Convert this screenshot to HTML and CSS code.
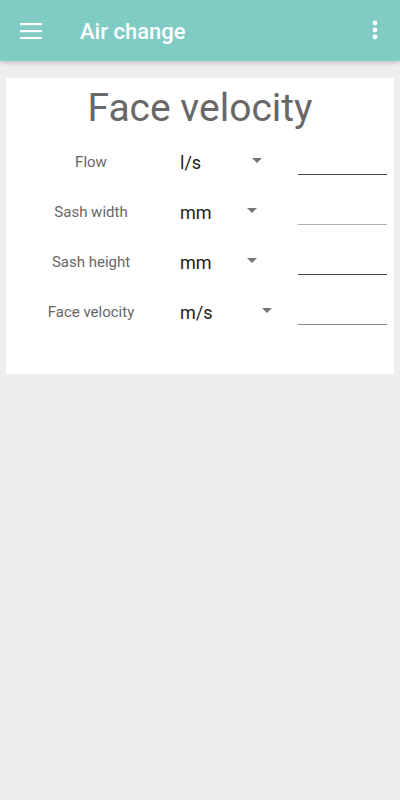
FILE: index.html
```html
<!DOCTYPE html>
<html lang="en">
<head>
<meta charset="utf-8">
<title>Air change</title>
<link rel="stylesheet" href="styles.css">
</head>
<body>
<header class="appbar">
  <svg class="menu" width="22" height="18" viewBox="0 0 22 18" aria-hidden="true">
    <rect x="0" y="2" width="22" height="2.2" fill="#fff"/>
    <rect x="0" y="9" width="22" height="2.2" fill="#fff"/>
    <rect x="0" y="16" width="22" height="2" fill="#fff"/>
  </svg>
  <h1 class="title">Air change</h1>
  <svg class="more" width="6" height="20" viewBox="0 0 6 20" aria-hidden="true">
    <circle cx="3" cy="3" r="2.4" fill="#fff"/>
    <circle cx="3" cy="10" r="2.4" fill="#fff"/>
    <circle cx="3" cy="17" r="2.4" fill="#fff"/>
  </svg>
</header>
<main class="card">
  <h2 class="heading">Face velocity</h2>
  <div class="row">
    <span class="label">Flow</span>
    <span class="spinner"><span class="unit w72">l/s</span><span class="arrow"></span></span>
    <span class="field line-dark"></span>
  </div>
  <div class="row">
    <span class="label">Sash width</span>
    <span class="spinner"><span class="unit w67">mm</span><span class="arrow"></span></span>
    <span class="field line-light"></span>
  </div>
  <div class="row">
    <span class="label">Sash height</span>
    <span class="spinner"><span class="unit w67">mm</span><span class="arrow"></span></span>
    <span class="field line-dark"></span>
  </div>
  <div class="row">
    <span class="label">Face velocity</span>
    <span class="spinner"><span class="unit w82">m/s</span><span class="arrow"></span></span>
    <span class="field line-mid"></span>
  </div>
</main>
</body>
</html>
```

FILE: styles.css
```css
html, body {
  margin: 0;
  padding: 0;
}
body {
  background: #eeeeee;
  font-family: Roboto, "Liberation Sans", sans-serif;
  width: 400px;
  height: 800px;
}
.appbar {
  height: 61px;
  background: #80cbc4;
  display: flex;
  align-items: center;
  padding: 0 22px 0 20px;
  box-shadow: 0 2px 4px rgba(0,0,0,0.18);
  position: relative;
}
.menu {
  display: block;
  margin-top: -2px;
}
.title {
  margin: 2px 0 0 38px;
  flex: 1;
  color: #fff;
  font-size: 22px;
  font-weight: 500;
  line-height: 26px;
}
.more {
  display: block;
  margin-top: -1px;
}
.card {
  margin: 17px 6px 0;
  background: #fff;
  padding: 6px 0 37px;
}
.heading {
  margin: 0;
  text-align: center;
  font-size: 39px;
  font-weight: 400;
  line-height: 48px;
  color: #686868;
}
.row {
  display: flex;
  align-items: center;
  height: 50px;
}
.heading + .row {
  margin-top: 5px;
}
.label {
  width: 170px;
  text-align: center;
  font-size: 15px;
  color: #666666;
}
.spinner {
  width: 116px;
  display: flex;
  align-items: center;
  padding-left: 4px;
  box-sizing: border-box;
}
.unit {
  font-size: 18px;
  color: #212121;
}
.w72 { width: 72px; }
.w67 { width: 67px; }
.w82 { width: 82px; }
.arrow {
  width: 0;
  height: 0;
  border-left: 5px solid transparent;
  border-right: 5px solid transparent;
  border-top: 5px solid #757575;
  margin-bottom: 4px;
}
.field {
  align-self: flex-start;
  width: 89px;
  height: 38px;
  margin-left: 6px;
  box-sizing: border-box;
  border-bottom: 1px solid #555;
}
.line-dark { border-bottom-color: #444; }
.line-light { border-bottom-color: #b0b0b0; }
.line-mid { border-bottom-color: #888; }
```
